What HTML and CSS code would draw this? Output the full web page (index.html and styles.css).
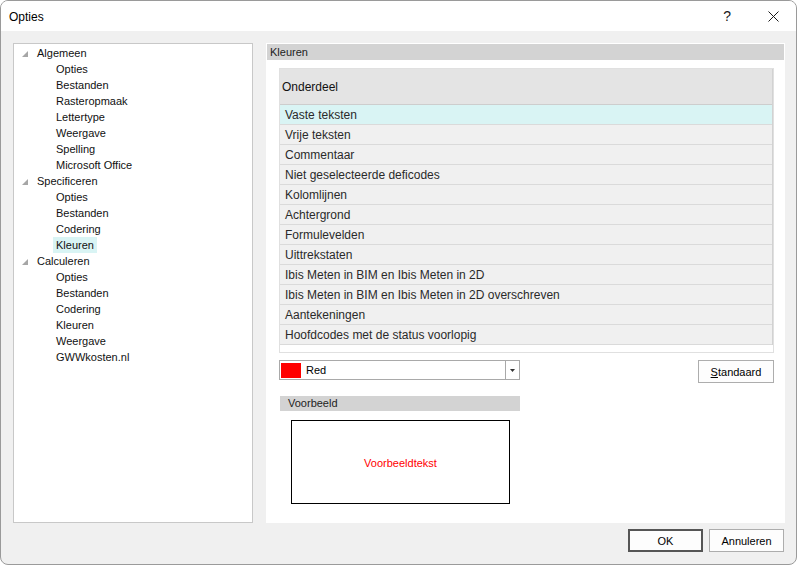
FILE: index.html
```html
<!DOCTYPE html>
<html>
<head>
<meta charset="utf-8">
<link rel="stylesheet" href="styles.css">
</head>
<body>
<div class="window">
  <div class="titlebar">
    <span class="title">Opties</span>
    <span class="help">?</span>
    <svg class="close" width="11" height="11" viewBox="0 0 11 11"><path d="M0.5 0.5 L10.5 10.5 M10.5 0.5 L0.5 10.5" stroke="#1a1a1a" stroke-width="1" fill="none"/></svg>
  </div>
  <div class="content">
    <div class="main">
      <div class="tree">
        <div class="node parent"><svg width="6" height="6" viewBox="0 0 6 6"><polygon points="6,0 6,6 0,6" fill="#a6a6a6"/></svg><span>Algemeen</span></div>
        <div class="node child"><span class="label">Opties</span></div>
        <div class="node child"><span class="label">Bestanden</span></div>
        <div class="node child"><span class="label">Rasteropmaak</span></div>
        <div class="node child"><span class="label">Lettertype</span></div>
        <div class="node child"><span class="label">Weergave</span></div>
        <div class="node child"><span class="label">Spelling</span></div>
        <div class="node child"><span class="label">Microsoft Office</span></div>
        <div class="node parent"><svg width="6" height="6" viewBox="0 0 6 6"><polygon points="6,0 6,6 0,6" fill="#a6a6a6"/></svg><span>Specificeren</span></div>
        <div class="node child"><span class="label">Opties</span></div>
        <div class="node child"><span class="label">Bestanden</span></div>
        <div class="node child"><span class="label">Codering</span></div>
        <div class="node child"><span class="label selected">Kleuren</span></div>
        <div class="node parent"><svg width="6" height="6" viewBox="0 0 6 6"><polygon points="6,0 6,6 0,6" fill="#a6a6a6"/></svg><span>Calculeren</span></div>
        <div class="node child"><span class="label">Opties</span></div>
        <div class="node child"><span class="label">Bestanden</span></div>
        <div class="node child"><span class="label">Codering</span></div>
        <div class="node child"><span class="label">Kleuren</span></div>
        <div class="node child"><span class="label">Weergave</span></div>
        <div class="node child"><span class="label">GWWkosten.nl</span></div>
      </div>
      <div class="panel">
        <div class="panel-bar">Kleuren</div>
        <div class="panel-body">
          <div class="grid">
            <div class="grid-col">
              <div class="grid-header">Onderdeel</div>
              <div class="grid-row selected">Vaste teksten</div>
              <div class="grid-row">Vrije teksten</div>
              <div class="grid-row">Commentaar</div>
              <div class="grid-row">Niet geselecteerde deficodes</div>
              <div class="grid-row">Kolomlijnen</div>
              <div class="grid-row">Achtergrond</div>
              <div class="grid-row">Formulevelden</div>
              <div class="grid-row">Uittrekstaten</div>
              <div class="grid-row">Ibis Meten in BIM en Ibis Meten in 2D</div>
              <div class="grid-row">Ibis Meten in BIM en Ibis Meten in 2D overschreven</div>
              <div class="grid-row">Aantekeningen</div>
              <div class="grid-row">Hoofdcodes met de status voorlopig</div>
            </div>
          </div>
          <div class="combo-row">
            <div class="combo">
              <span class="swatch"></span>
              <span class="combo-text">Red</span>
              <span class="combo-btn"><svg width="5" height="3" viewBox="0 0 5 3"><polygon points="0,0 5,0 2.5,3" fill="#333"/></svg></span>
            </div>
            <button class="btn"><u>S</u>tandaard</button>
          </div>
          <div class="sample-bar">Voorbeeld</div>
          <div class="sample">Voorbeeldtekst</div>
        </div>
      </div>
    </div>
    <div class="footer">
      <button class="btn default">OK</button>
      <button class="btn">Annuleren</button>
    </div>
  </div>
</div>
</body>
</html>
```
FILE: styles.css
```css
html, body {
  margin: 0;
  padding: 0;
  background: #ffffff;
}
body {
  font-family: "Liberation Sans", Arial, sans-serif;
  font-size: 11px;
  color: #000;
}
.window {
  width: 797px;
  height: 565px;
  box-sizing: border-box;
  border: 1px solid #9a9a9a;
  border-radius: 8px;
  overflow: hidden;
  background: #f0f0f0;
  display: flex;
  flex-direction: column;
}
.titlebar {
  height: 30px;
  background: #ffffff;
  display: flex;
  align-items: center;
  padding-left: 8px;
  flex-shrink: 0;
}
.title {
  font-size: 12px;
  color: #000;
  flex: 1;
  padding-top: 1px;
}
.help {
  font-size: 14px;
  margin-right: 37px;
  color: #1a1a1a;
}
.close {
  margin-right: 17px;
}
.content {
  flex: 1;
  display: flex;
  flex-direction: column;
  padding: 12px 11px 0 12px;
}
.main {
  display: flex;
  gap: 13px;
  height: 480px;
}
.tree {
  width: 240px;
  box-sizing: border-box;
  background: #fff;
  border: 1px solid #c8c8c8;
  padding-top: 1px;
  color: #111;
}
.node {
  height: 16px;
  line-height: 16px;
  white-space: nowrap;
}
.parent {
  display: flex;
  align-items: center;
  padding-left: 8px;
}
.parent svg {
  margin-right: 9px;
  margin-top: 1px;
}
.child {
  padding-left: 39px;
}
.label {
  display: inline-block;
  padding: 0 3px;
  height: 16px;
}
.label.selected {
  background: #d9f4f4;
}
.panel {
  width: 519px;
  background: #fff;
  display: flex;
  flex-direction: column;
}
.panel-bar {
  margin: 1px 1px 0 1px;
  height: 16px;
  line-height: 16px;
  background: #d3d3d3;
  padding-left: 3px;
  color: #222;
}
.panel-body {
  padding: 8px 11px 0 13px;
  display: flex;
  flex-direction: column;
  align-items: flex-start;
}
.grid {
  width: 495px;
  height: 285px;
  box-sizing: border-box;
  border: 1px solid #e0e0e0;
  background: #fff;
}
.grid-col {
  width: 493px;
  box-sizing: border-box;
  border-right: 1px solid #d2d2d2;
}
.grid-header {
  height: 34px;
  line-height: 35px;
  padding-top: 1px;
  background: #e4e4e4;
  border-bottom: 1px solid #cdcdcd;
  padding-left: 2px;
  font-size: 12px;
  color: #111;
}
.grid-row {
  height: 18px;
  line-height: 19px;
  padding-top: 1px;
  background: #f0f0f0;
  border-bottom: 1px solid #dadada;
  padding-left: 5px;
  font-size: 12px;
  color: #2a2a2a;
  white-space: nowrap;
}
.grid-row.selected {
  background: #d9f4f4;
}
.combo-row {
  margin-top: 7px;
  width: 495px;
  display: flex;
  justify-content: space-between;
  align-items: flex-start;
}
.combo {
  width: 241px;
  height: 20px;
  box-sizing: border-box;
  border: 1px solid #a9a9a9;
  display: flex;
  align-items: center;
  background: #fff;
}
.swatch {
  width: 20px;
  height: 15px;
  background: #ff0000;
  margin-left: 1px;
}
.combo-text {
  flex: 1;
  margin-left: 5px;
  color: #000;
}
.combo-btn {
  width: 13px;
  height: 18px;
  border-left: 1px solid #a9a9a9;
  display: flex;
  align-items: center;
  justify-content: center;
}
.btn {
  width: 76px;
  height: 23px;
  box-sizing: border-box;
  border: 1px solid #adadad;
  background: #fdfdfd;
  font-family: "Liberation Sans", Arial, sans-serif;
  font-size: 11px;
  color: #000;
  padding: 0;
  border-radius: 0;
}
.sample-bar {
  margin-top: 13px;
  margin-left: 1px;
  width: 240px;
  height: 15px;
  line-height: 15px;
  background: #d3d3d3;
  padding-left: 8px;
  box-sizing: border-box;
  color: #222;
}
.sample {
  margin-top: 9px;
  margin-left: 12px;
  width: 219px;
  height: 84px;
  box-sizing: border-box;
  border: 1px solid #000;
  display: flex;
  align-items: center;
  justify-content: center;
  color: #ff0000;
  padding-top: 1px;
}
.footer {
  display: flex;
  justify-content: flex-end;
  gap: 6px;
  margin-top: 6px;
  padding-right: 1px;
}
.footer .btn {
  width: 75px;
}
.btn.default {
  border: 2px solid #555;
}
```
